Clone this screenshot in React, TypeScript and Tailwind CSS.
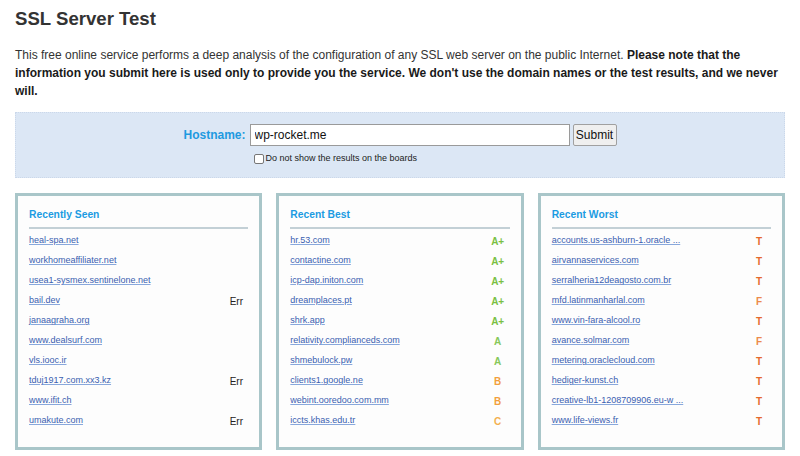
import React from "react";

type Row = {
  host: string;
  grade?: string;
  color?: string;
};

const recentlySeen: Row[] = [
  { host: "heal-spa.net" },
  { host: "workhomeaffiliater.net" },
  { host: "usea1-sysmex.sentinelone.net" },
  { host: "bail.dev", grade: "Err" },
  { host: "janaagraha.org" },
  { host: "www.dealsurf.com" },
  { host: "vls.iooc.ir" },
  { host: "tduj1917.com.xx3.kz", grade: "Err" },
  { host: "www.ifit.ch" },
  { host: "umakute.com", grade: "Err" },
];

const recentBest: Row[] = [
  { host: "hr.53.com", grade: "A+", color: "text-[#79c043]" },
  { host: "contactine.com", grade: "A+", color: "text-[#79c043]" },
  { host: "icp-dap.initon.com", grade: "A+", color: "text-[#79c043]" },
  { host: "dreamplaces.pt", grade: "A+", color: "text-[#79c043]" },
  { host: "shrk.app", grade: "A+", color: "text-[#79c043]" },
  { host: "relativity.complianceds.com", grade: "A", color: "text-[#86c85a]" },
  { host: "shmebulock.pw", grade: "A", color: "text-[#86c85a]" },
  { host: "clients1.google.ne", grade: "B", color: "text-[#f2a03c]" },
  { host: "webint.ooredoo.com.mm", grade: "B", color: "text-[#f2a03c]" },
  { host: "iccts.khas.edu.tr", grade: "C", color: "text-[#f3b04f]" },
];

const recentWorst: Row[] = [
  { host: "accounts.us-ashburn-1.oracle ...", grade: "T", color: "text-[#e5692c]" },
  { host: "airvannaservices.com", grade: "T", color: "text-[#e5692c]" },
  { host: "serralheria12deagosto.com.br", grade: "T", color: "text-[#e5692c]" },
  { host: "mfd.latinmanharlal.com", grade: "F", color: "text-[#ec8a4c]" },
  { host: "www.vin-fara-alcool.ro", grade: "T", color: "text-[#e5692c]" },
  { host: "avance.solmar.com", grade: "F", color: "text-[#ec8a4c]" },
  { host: "metering.oraclecloud.com", grade: "T", color: "text-[#e5692c]" },
  { host: "hediger-kunst.ch", grade: "T", color: "text-[#e5692c]" },
  { host: "creative-lb1-1208709906.eu-w ...", grade: "T", color: "text-[#e5692c]" },
  { host: "www.life-views.fr", grade: "T", color: "text-[#e5692c]" },
];

const Board = ({ title, rows }: { title: string; rows: Row[] }) => {
  return (
    <div className="flex-1 h-[257px] border-[3px] border-[#a9c6c9] bg-[#fdfdfd] px-[11px] pt-[12px]">
      <h2 className="text-[10.3px] leading-[14px] font-bold text-[#1b9be2]">
        {title}
      </h2>
      <div className="mt-[5px] mb-[2px] h-[2px] bg-[#c3d0d6]" />
      {rows.map((row) => (
        <div key={row.host} className="flex h-[20px] items-center">
          <a
            href="#"
            className="flex-1 text-[9px] text-[#3a60b0] underline decoration-[#89a8dc] underline-offset-1"
          >
            {row.host}
          </a>
          {row.grade && (
            <span
              className={
                row.grade === "Err"
                  ? "w-[24px] text-center text-[10px] text-[#222]"
                  : `w-[24px] text-center text-[10px] font-bold ${row.color}`
              }
            >
              {row.grade}
            </span>
          )}
        </div>
      ))}
    </div>
  );
};

export default function App() {
  return (
    <div className="w-[800px] h-[456px] overflow-hidden bg-white px-[15px] font-['Liberation_Sans',Arial,sans-serif] text-[#333]">
      <h1 className="pt-[8px] text-[18.6px] leading-[22px] font-bold">
        SSL Server Test
      </h1>
      <p className="mt-[16px] text-[12px] leading-[18px]">
        This free online service performs a deep analysis of the configuration
        of any SSL web server on the public Internet.{" "}
        <b className="text-[#1a1a1a]">
          Please note that the information you submit here is used only to
          provide you the service. We don't use the domain names or the test
          results, and we never will.
        </b>
      </p>

      <div className="mt-[12px] h-[66px] bg-[#dce7f5] border border-dotted border-[#cbd8ea] pt-[11px]">
        <div className="flex justify-center">
          <div className="flex items-start">
            <span className="mr-[4px] text-[12px] leading-[22px] font-bold text-[#1e9ae0]">
              Hostname:
            </span>
            <div className="flex flex-col">
              <div className="flex items-center">
                <input
                  type="text"
                  defaultValue="wp-rocket.me"
                  className="h-[22px] w-[320px] border border-[#9a9a9a] bg-white px-[4px] text-[12px] text-[#111] outline-none"
                />
                <button className="ml-[3px] h-[22px] w-[44px] border border-[#a0a0a0] bg-[#efefef] text-[12px] text-[#111] rounded-[2px]">
                  Submit
                </button>
              </div>
              <label className="ml-[4px] mt-[6px] flex items-center text-[9px] text-[#222]">
                <span className="mr-[2px] h-[10px] w-[10px] rounded-[2px] border border-[#777] bg-white" />
                Do not show the results on the boards
              </label>
            </div>
          </div>
        </div>
      </div>

      <div className="mt-[15px] flex gap-[14px]">
        <Board title="Recently Seen" rows={recentlySeen} />
        <Board title="Recent Best" rows={recentBest} />
        <Board title="Recent Worst" rows={recentWorst} />
      </div>
    </div>
  );
}
